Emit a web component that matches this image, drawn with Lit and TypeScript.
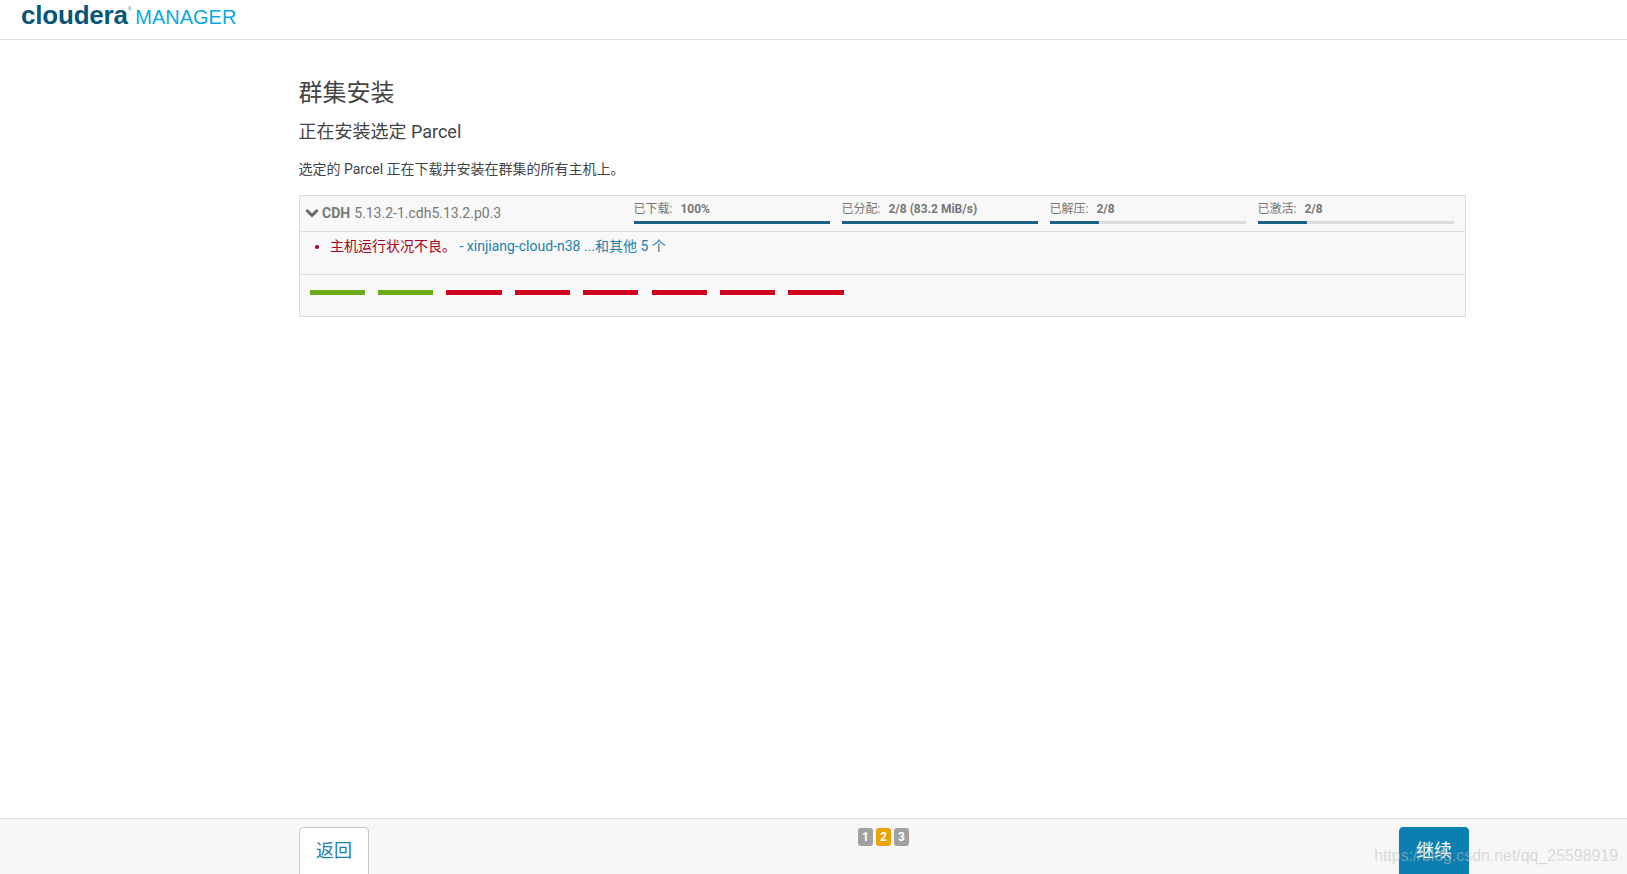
import { LitElement, html, css } from "lit";
import { customElement } from "lit/decorators.js";

const STAGES = [
  { label: "已下载:", value: "100%", pct: 100 },
  { label: "已分配:", value: "2/8 (83.2 MiB/s)", pct: 100 },
  { label: "已解压:", value: "2/8", pct: 25 },
  { label: "已激活:", value: "2/8", pct: 25 },
];
const HOSTS = ["ok", "ok", "bad", "bad", "bad", "bad", "bad", "bad"];

@customElement("app-root")
export class AppRoot extends LitElement {
  static styles = css`
    :host {
      display: flex;
      flex-direction: column;
      height: 874px;
      overflow: hidden;
      background: #fff;
      font-family: Roboto, "Noto Sans CJK SC", sans-serif;
      color: #333;
      position: relative;
    }
    .top {
      height: 39px;
      box-sizing: content-box;
      border-bottom: 1px solid #dcdcdc;
      padding-left: 21px;
      display: flex;
      align-items: baseline;
      gap: 4px;
      flex: none;
      line-height: 30px;
      font-family: "Liberation Sans", sans-serif;
    }
    .brand {
      font-size: 26px;
      font-weight: 700;
      letter-spacing: -0.2px;
      color: #075678;
    }
    .brand sup {
      font-size: 5px;
      color: #7a9bb0;
      vertical-align: 13px;
      line-height: 0;
    }
    .mgr {
      font-size: 20px;
      color: #0ba8df;
    }
    main {
      flex: 1;
      padding: 0 161px 0 299px;
    }
    h1 {
      font-size: 24px;
      font-weight: 400;
      line-height: 34px;
      margin: 36px 0 0 -0.5px;
      color: #444;
    }
    h2 {
      font-size: 18px;
      font-weight: 400;
      line-height: 26px;
      margin: 9px 0 0 -0.5px;
      color: #444;
    }
    p {
      font-size: 14px;
      line-height: 20px;
      margin: 14px 0 0 -0.5px;
      color: #444;
    }
    .panel {
      margin-top: 16px;
      border: 1px solid #dcdcdc;
      background: #f8f8f8;
    }
    .head {
      height: 35px;
      display: grid;
      grid-template-columns: 322px repeat(4, 196.5px);
      column-gap: 11.5px;
      padding-right: 11px;
      border-bottom: 1px solid #dcdcdc;
      color: #777;
    }
    .name {
      display: flex;
      align-items: center;
      gap: 3px;
      padding: 0 0 2px 5px;
      font-size: 14px;
      line-height: 32px;
    }
    .name svg { flex: none; }
    .name b { font-weight: 700; margin-right: 4px; }
    .stage {
      font-size: 12px;
      line-height: 16px;
      padding-top: 5px;
      min-width: 0;
    }
    .stage b { font-weight: 700; margin-left: 8px; }
    .track {
      height: 3px;
      background: #dcdcdc;
      margin-top: 4px;
    }
    .fill { height: 100%; background: #1a6183; }
    .msgs {
      height: 43px;
      border-bottom: 1px solid #dcdcdc;
      font-size: 14px;
      line-height: 20px;
      padding: 4px 0 0 30px;
      box-sizing: border-box;
    }
    .msgs ul { margin: 0; padding: 0; list-style: none; }
    .msgs li { color: #a80021; position: relative; }
    .msgs li::before {
      content: "";
      position: absolute;
      left: -15px;
      top: 9px;
      width: 4px;
      height: 4px;
      border-radius: 50%;
      background: #a80021;
    }
    .msgs a { color: #1b81ad; text-decoration: none; }
    .hosts {
      height: 41px;
      display: flex;
      gap: 13.23px;
      padding: 15px 0 0 9.6px;
      box-sizing: border-box;
    }
    .hosts i { width: 55.2px; height: 5px; display: block; }
    .ok { background: #6aaa12; }
    .bad { background: #d0021f; }
    footer {
      flex: none;
      height: 47px;
      border-top: 1px solid #dcdcdc;
      background: #f7f7f7;
      padding: 8px 158px 0 299px;
      display: flex;
      justify-content: space-between;
      align-items: flex-start;
      overflow: hidden;
    }
    button {
      width: 70px;
      height: 56px;
      border-radius: 4px;
      font: 18px Roboto, "Noto Sans CJK SC", sans-serif;
      flex: none;
      padding: 0 0 12px;
      cursor: pointer;
    }
    .back { background: #fff; border: 1px solid #c8c8c8; color: #1b81ad; }
    .next { background: #0b7fb0; border: 1px solid #0b7fb0; color: #fff; }
    .steps {
      display: flex;
      gap: 3px;
      margin-top: 1px;
      margin-left: -1px;
    }
    .steps span {
      width: 15px;
      height: 18px;
      border-radius: 3px;
      background: #a0a0a0;
      color: #fff;
      font-size: 12px;
      font-weight: 700;
      line-height: 18px;
      text-align: center;
    }
    .steps .on { background: #eea200; }
    .mark {
      position: absolute;
      right: 9px;
      bottom: 9px;
      font: 15.9px "Liberation Sans", sans-serif;
      color: rgba(190, 190, 190, 0.55);
      white-space: nowrap;
    }
  `;

  render() {
    return html`
      <header class="top">
        <span class="brand">cloudera<sup>®</sup></span>
        <span class="mgr">MANAGER</span>
      </header>
      <main>
        <h1>群集安装</h1>
        <h2>正在安装选定 Parcel</h2>
        <p>选定的 Parcel 正在下载并安装在群集的所有主机上。</p>
        <section class="panel">
          <div class="head">
            <div class="name">
              <svg width="14" height="10" viewBox="0 0 14 10">
                <path d="M1.5 2 L7 7.5 L12.5 2" fill="none" stroke="#666" stroke-width="3" />
              </svg>
              <span><b>CDH</b>5.13.2-1.cdh5.13.2.p0.3</span>
            </div>
            ${STAGES.map(
              (s) => html`<div class="stage">
                ${s.label}<b>${s.value}</b>
                <div class="track"><div class="fill" style="width:${s.pct}%"></div></div>
              </div>`
            )}
          </div>
          <div class="msgs">
            <ul>
              <li>主机运行状况不良。 <a>- xinjiang-cloud-n38 ...和其他 5 个</a></li>
            </ul>
          </div>
          <div class="hosts">${HOSTS.map((h) => html`<i class=${h}></i>`)}</div>
        </section>
      </main>
      <footer>
        <button class="back">返回</button>
        <div class="steps"><span>1</span><span class="on">2</span><span>3</span></div>
        <button class="next">继续</button>
      </footer>
      <div class="mark">https://blog.csdn.net/qq_25598919</div>
    `;
  }
}
